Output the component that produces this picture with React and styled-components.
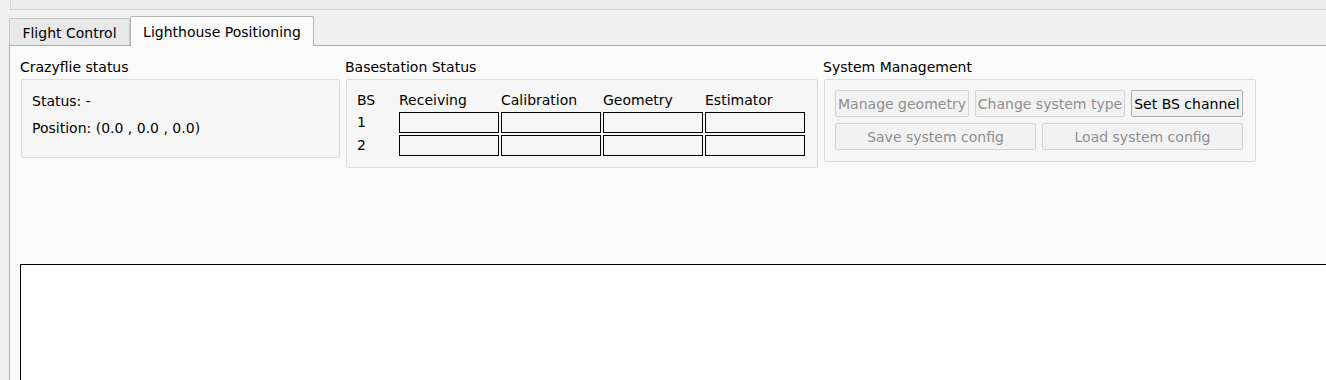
import styled, { createGlobalStyle } from "styled-components";

const GlobalStyle = createGlobalStyle`
  html, body {
    margin: 0;
    padding: 0;
    background: #f0f0f0;
    overflow: hidden;
  }
  body {
    font-family: "DejaVu Sans", "Liberation Sans", sans-serif;
    font-size: 14px;
    color: #000;
  }
`;

const Window = styled.div`
  width: 1326px;
  height: 380px;
  overflow: hidden;
`;

const TopStrip = styled.div`
  margin-left: 10px;
  height: 9px;
  background: #ececec;
  border-left: 1px solid #d6d6d6;
  border-bottom: 1px solid #d6d6d6;
`;

const TabBar = styled.div`
  display: flex;
  align-items: flex-end;
  margin: 6px 0 0 9px;
  height: 29px;
  position: relative;
  z-index: 1;
`;

const Tab = styled.div`
  box-sizing: border-box;
  display: flex;
  align-items: center;
  justify-content: center;
  width: ${(p) => p.w}px;
  height: ${(p) => (p.active ? 30 : 27)}px;
  margin-bottom: ${(p) => (p.active ? -1 : 0)}px;
  padding-top: ${(p) => (p.active ? 1 : 2)}px;
  background: ${(p) => (p.active ? "#fafafa" : "#e8e8e8")};
  border: 1px solid ${(p) => (p.active ? "#b4b4b4" : "#c6c6c6")};
  border-bottom: none;
  border-radius: 2px 2px 0 0;
  white-space: nowrap;
`;

const Pane = styled.div`
  margin-left: 9px;
  height: 335px;
  box-sizing: border-box;
  background: #fafafa;
  border-left: 1px solid #acacac;
  border-top: 1px solid #acacac;
  padding: 13px 0 0 10px;
  overflow: hidden;
`;

const GroupRow = styled.div`
  display: flex;
  align-items: flex-start;
  gap: 5px;
`;

const Group = styled.div`
  display: flex;
  flex-direction: column;
  width: ${(p) => p.w}px;
`;

const GroupTitle = styled.div`
  height: 16px;
  line-height: 16px;
  margin-bottom: 4px;
  white-space: nowrap;
`;

const GroupBox = styled.div`
  box-sizing: border-box;
  margin-left: 1px;
  background: #f6f6f6;
  border: 1px solid #dcdcdc;
  border-radius: 2px;
  height: ${(p) => p.h}px;
`;

const StatusBox = styled(GroupBox)`
  padding: 11px 10px 0;
  display: flex;
  flex-direction: column;
  gap: 7px;
`;

const StatusLine = styled.div`
  height: 20px;
  line-height: 20px;
  white-space: nowrap;
`;

const BsGrid = styled.div`
  display: grid;
  grid-template-columns: 40px repeat(4, 100px);
  grid-template-rows: 20px 21px 21px;
  column-gap: 2px;
  row-gap: 2px;
  padding: 10px 11px 0 10px;
  & > span {
    line-height: 20px;
    white-space: nowrap;
  }
`;

const Cell = styled.div`
  box-sizing: border-box;
  border: 1px solid #000;
  height: 21px;
`;

const ButtonArea = styled.div`
  display: flex;
  flex-direction: column;
  gap: 6px;
  padding: 10px 0 0 10px;
`;

const ButtonRow = styled.div`
  display: flex;
  gap: 6px;
`;

const Button = styled.div`
  box-sizing: border-box;
  width: ${(p) => p.w}px;
  height: 27px;
  display: flex;
  align-items: center;
  justify-content: center;
  border-radius: 2px;
  white-space: nowrap;
  border: 1px solid ${(p) => (p.disabled ? "#d2d2d2" : "#adadad")};
  background: ${(p) => (p.disabled ? "#f2f2f2" : "#f1f1f1")};
  color: ${(p) => (p.disabled ? "#8e8e8e" : "#000")};
`;

const Canvas = styled.div`
  margin-top: 96px;
  width: 1340px;
  height: 200px;
  background: #fff;
  border: 1px solid #000;
`;

export default function App() {
  return (
    <Window>
      <GlobalStyle />
      <TopStrip />
      <TabBar>
        <Tab w={121}>Flight Control</Tab>
        <Tab w={184} active>
          Lighthouse Positioning
        </Tab>
      </TabBar>
      <Pane>
        <GroupRow>
          <Group w={320}>
            <GroupTitle>Crazyflie status</GroupTitle>
            <StatusBox h={79}>
              <StatusLine>Status: -</StatusLine>
              <StatusLine>Position: (0.0 , 0.0 , 0.0)</StatusLine>
            </StatusBox>
          </Group>
          <Group w={473}>
            <GroupTitle>Basestation Status</GroupTitle>
            <GroupBox h={89}>
              <BsGrid>
                <span>BS</span>
                <span>Receiving</span>
                <span>Calibration</span>
                <span>Geometry</span>
                <span>Estimator</span>
                {[1, 2].map((n) => (
                  <>
                    <span key={"l" + n}>{n}</span>
                    <Cell key={"a" + n} />
                    <Cell key={"b" + n} />
                    <Cell key={"c" + n} />
                    <Cell key={"d" + n} />
                  </>
                ))}
              </BsGrid>
            </GroupBox>
          </Group>
          <Group w={433}>
            <GroupTitle>System Management</GroupTitle>
            <GroupBox h={83}>
              <ButtonArea>
                <ButtonRow>
                  <Button w={134} disabled>Manage geometry</Button>
                  <Button w={150} disabled>Change system type</Button>
                  <Button w={112}>Set BS channel</Button>
                </ButtonRow>
                <ButtonRow>
                  <Button w={201} disabled>Save system config</Button>
                  <Button w={201} disabled>Load system config</Button>
                </ButtonRow>
              </ButtonArea>
            </GroupBox>
          </Group>
        </GroupRow>
        <Canvas />
      </Pane>
    </Window>
  );
}
